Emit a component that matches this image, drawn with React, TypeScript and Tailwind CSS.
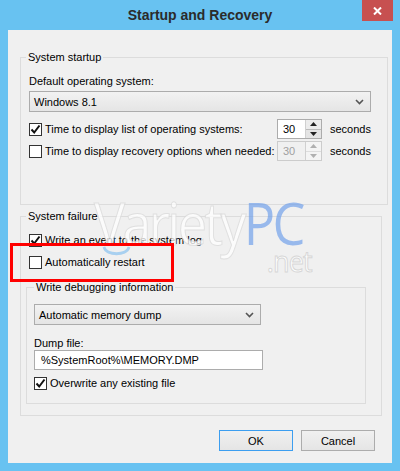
import React from "react";

const Check = ({ checked }: { checked?: boolean }) => (
  <span className="w-[13px] h-[13px] shrink-0 border border-[#333333] bg-white flex items-center justify-center">
    {checked && (
      <svg width="11" height="11" viewBox="0 0 11 11">
        <path d="M1.5 5.5 L4.2 8.5 L9.5 1.5" fill="none" stroke="#111" strokeWidth="2" />
      </svg>
    )}
  </span>
);

const Spin = ({ disabled }: { disabled?: boolean }) => (
  <div
    className={`w-[45px] h-[20px] flex border ${
      disabled ? "border-[#cccccc] text-[#a0a0a0] bg-[#f0f0f0]" : "border-[#acacac] bg-white"
    }`}
  >
    <div className="flex-1 pl-[5px] flex items-center">30</div>
    <div className="w-[16px] flex flex-col border-l border-[#d0d0d0]">
      <div className={`flex-1 flex items-center justify-center border-b ${disabled ? "border-[#dddddd] bg-[#f4f4f4]" : "border-[#bbbbbb] bg-[#ececec]"}`}>
        <svg width="7" height="4" viewBox="0 0 7 4">
          <path d="M0 4 L3.5 0 L7 4 Z" fill={disabled ? "#b0b0b0" : "#222"} />
        </svg>
      </div>
      <div className={`flex-1 flex items-center justify-center ${disabled ? "bg-[#f4f4f4]" : "bg-[#e4e4e4]"}`}>
        <svg width="7" height="4" viewBox="0 0 7 4">
          <path d="M0 0 L3.5 4 L7 0 Z" fill={disabled ? "#b0b0b0" : "#222"} />
        </svg>
      </div>
    </div>
  </div>
);

const Chevron = () => (
  <svg width="9" height="6" viewBox="0 0 9 6">
    <path d="M1 1 L4.5 4.5 L8 1" fill="none" stroke="#555" strokeWidth="1.6" />
  </svg>
);

const Select = ({ value, w }: { value: string; w: string }) => (
  <div className={`${w} h-[21px] border border-[#acacac] bg-gradient-to-b from-[#f2f2f2] to-[#e5e5e5] flex items-center justify-between pl-[4px] pr-[6px]`}>
    <span>{value}</span>
    <Chevron />
  </div>
);

const Btn = ({ label, focus }: { label: string; focus?: boolean }) => (
  <button
    className={`w-[74px] h-[21px] border bg-gradient-to-b from-[#f0f0f0] to-[#e5e5e5] ${
      focus ? "border-[#3c9ef0]" : "border-[#acacac]"
    }`}
  >
    {label}
  </button>
);

export default function App() {
  return (
    <div className="w-[400px] h-[471px] bg-[#68c2f1] flex flex-col font-['Liberation_Sans',Arial,sans-serif] text-[11px] leading-[14px] text-black">
      <div className="h-[30px] shrink-0 flex items-center justify-center relative">
        <span className="font-bold text-[14px] text-[#2b2b2b]">Startup and Recovery</span>
        <div className="absolute right-[7px] top-0 w-[31px] h-[21px] bg-[#c75050] flex items-center justify-center">
          <svg width="9" height="8" viewBox="0 0 9 8">
            <path d="M1 0.5 L8 7.5 M8 0.5 L1 7.5" stroke="#fff" strokeWidth="2" />
          </svg>
        </div>
      </div>

      <div className="mx-[8px] mb-[8px] flex-1 min-h-0 bg-[#f0f0f0] relative pt-[20px] pl-[12px] pr-[10px] flex flex-col">
        <fieldset className="border border-[#dcdcdc] pl-[8px] pr-[16px] pt-[10px] pb-[43px]">
          <legend className="-ml-[3px] px-[2px]">System startup</legend>
          <div>Default operating system:</div>
          <div className="mt-[3px]">
            <Select value="Windows 8.1" w="w-full" />
          </div>
          <div className="mt-[7px] flex items-center">
            <div className="w-[248px] flex items-center whitespace-nowrap">
              <Check checked />
              <span className="ml-[3px]">Time to display list of operating systems:</span>
            </div>
            <Spin />
            <span className="ml-[8px]">seconds</span>
          </div>
          <div className="mt-[2px] flex items-center">
            <div className="w-[248px] flex items-center whitespace-nowrap">
              <Check />
              <span className="ml-[3px]">Time to display recovery options when needed:</span>
            </div>
            <Spin disabled />
            <span className="ml-[8px]">seconds</span>
          </div>
        </fieldset>

        <fieldset className="mt-[4px] border border-[#dcdcdc] pl-[5px] pr-[15px] pt-[9px] pb-[11px]">
          <legend className="px-[2px]">System failure</legend>
          <div className="ml-[3px] h-[16px] flex items-center">
            <Check checked />
            <span className="ml-[3px]">Write an event to the system log</span>
          </div>
          <div className="ml-[3px] mt-[6px] h-[16px] flex items-center">
            <Check />
            <span className="ml-[3px]">Automatically restart</span>
          </div>
          <fieldset className="mt-[10px] border border-[#dcdcdc] pl-[7px] pt-[10px] pb-[12px]">
            <legend className="px-[2px]">Write debugging information</legend>
            <Select value="Automatic memory dump" w="w-[227px]" />
            <div className="mt-[11px]">Dump file:</div>
            <div className="w-[229px] h-[20px] border border-[#acacac] bg-white flex items-center pl-[6px]">
              %SystemRoot%\MEMORY.DMP
            </div>
            <div className="mt-[5px] h-[16px] flex items-center">
              <Check checked />
              <span className="ml-[3px]">Overwrite any existing file</span>
            </div>
          </fieldset>
        </fieldset>

        <div className="mt-[14px] pr-[7px] flex justify-end gap-[8px]">
          <Btn label="OK" focus />
          <Btn label="Cancel" />
        </div>

        {/* watermark */}
        <div className="absolute left-[86px] top-[164px] pointer-events-none select-none font-['Open_Sans',sans-serif] leading-none origin-left scale-x-[0.9]">
          <span className="text-[58px] tracking-[-3px] text-white [-webkit-text-stroke:1px_#dadada] opacity-75">Variety</span>
          <span className="text-[58px] tracking-[-3px] text-[#6a9ceb] opacity-65">PC</span>
          <div className="ml-[192px] -mt-[6px] text-[30px] tracking-[-1px] text-white [-webkit-text-stroke:1px_#d4d4d4] opacity-90">.net</div>
          <svg className="absolute left-[8px] top-[50px]" width="34" height="14" viewBox="0 0 34 14">
            <path d="M3 3 C 6 12, 28 12, 31 3" fill="none" stroke="#5fb0f0" strokeWidth="3" opacity="0.5" />
          </svg>
        </div>

        {/* highlight */}
        <div className="absolute left-[2px] top-[213px] w-[164px] h-[39px] border-[3px] border-[#ff0000]" />
      </div>
    </div>
  );
}
